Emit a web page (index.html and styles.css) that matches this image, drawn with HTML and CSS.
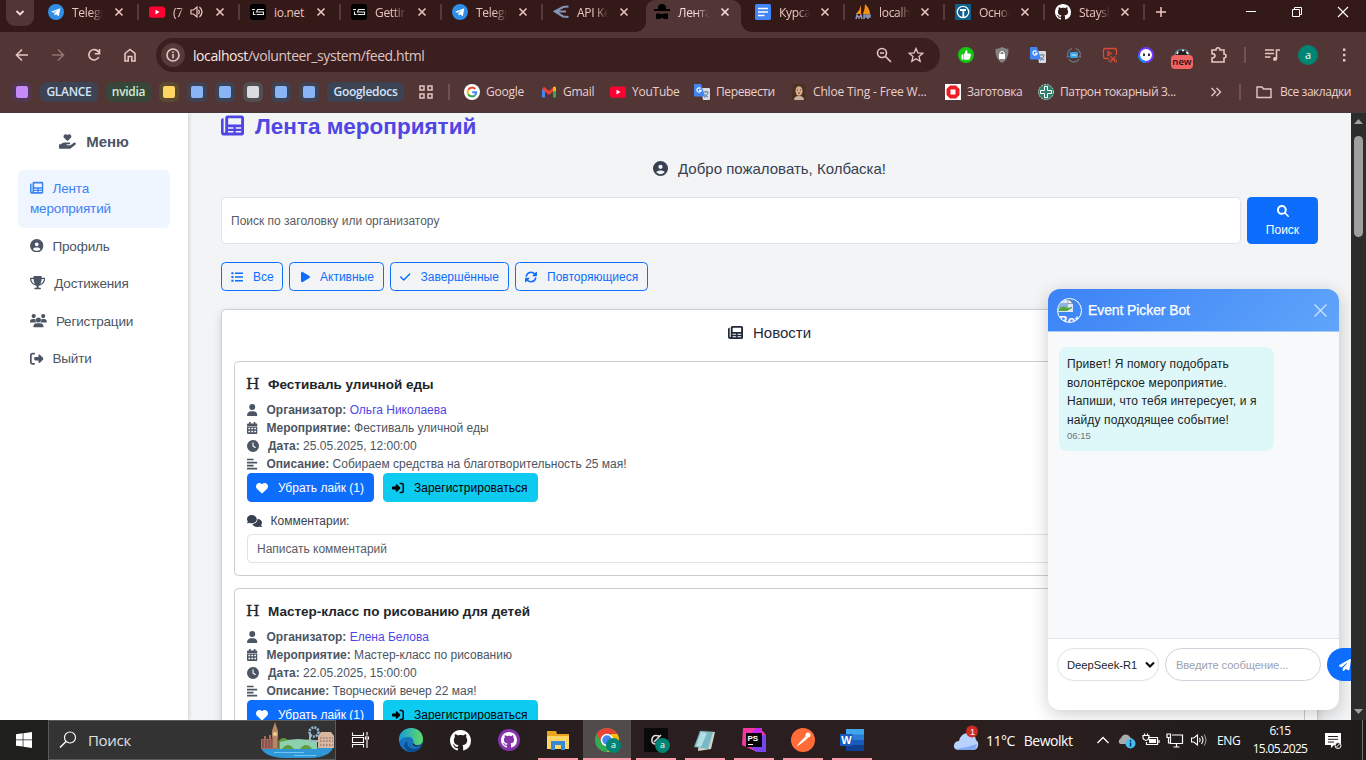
FILE: index.html
```html
<!DOCTYPE html>
<html lang="ru">
<head>
<meta charset="utf-8">
<title>Лента мероприятий</title>
<link rel="stylesheet" href="styles.css">
</head>
<body>
<svg class="sprite" xmlns="http://www.w3.org/2000/svg">
  <symbol id="telegram" viewBox="0 0 16 16"><circle cx="8" cy="8" r="8" fill="#2f8fe8"/><path fill="#fff" d="M3 7.800 12.300 4.200 10.800 12.200 8 10.200 6.500 11.500 6.300 9.200 10 6 5.300 8.700z"/></symbol>
  <symbol id="youtube" viewBox="0 0 16 16"><rect y="2.500" width="16" height="11.300" rx="2.500" fill="#f03"/><path fill="#fff" d="M6.500 5.700v4.800l4-2.400z"/></symbol>
  <symbol id="ionet" viewBox="0 0 16 16"><rect width="16" height="16" rx="3" fill="#000"/><path fill="none" stroke="#e8e8e8" stroke-width="1.100" d="M2 5.500h3M3.500 7.500v3h2M14 5.500H7.500L6.500 8H13.500V10.500H6.500"/></symbol>
  <symbol id="docs" viewBox="0 0 16 16"><rect width="16" height="16" rx="1.500" fill="#4285f4"/><path stroke="#fff" stroke-width="1.600" d="M3 4.500h10M3 8h10M3 11.500h6.500"/></symbol>
  <symbol id="github" viewBox="0 0 16 16"><path d="M8 0C3.580 0 0 3.580 0 8c0 3.540 2.290 6.530 5.470 7.590.4.070.55-.17.55-.38 0-.19-.01-.82-.01-1.490-2.010.37-2.530-.49-2.690-.94-.09-.23-.48-.94-.82-1.130-.28-.15-.68-.52-.01-.53.63-.01 1.080.58 1.230.82.72 1.210 1.870.87 2.330.66.070-.52.28-.87.51-1.070-1.780-.2-3.640-.89-3.640-3.950 0-.87.31-1.590.82-2.150-.08-.2-.36-1.020.08-2.120 0 0 .67-.21 2.200.82.64-.18 1.320-.27 2-.27s1.360.09 2 .27c1.530-1.040 2.200-.82 2.200-.82.44 1.100.16 1.920.08 2.120.51.56.82 1.270.82 2.150 0 3.070-1.870 3.750-3.650 3.950.29.25.54.73.54 1.480 0 1.070-.01 1.930-.01 2.200 0 .21.15.46.55.38A8.010 8.010 0 0 0 16 8c0-4.420-3.580-8-8-8z"/></symbol>
  <symbol id="translate" viewBox="0 0 16 16"><path fill="#d9dde3" d="M7 4h8a1 1 0 0 1 1 1v10a1 1 0 0 1-1 1H9z"/><path stroke="#5f7891" fill="none" d="M9.500 8h5M12 7v1M14 8.500c-1 3-2.500 4-4 5M10.500 10c1 1.500 2 2.500 3.500 3"/><path fill="#4285f4" d="M1 0h6l4 12.500H1a1 1 0 0 1-1-1V1a1 1 0 0 1 1-1z"/><path fill="none" stroke="#fff" stroke-width="1.200" d="M6.500 4.500a2.100 2.100 0 1 0 .6 1.800H5"/></symbol>
  <symbol id="close" viewBox="0 0 10 10"><path d="M1.500 1.500l7 7M8.500 1.500l-7 7" stroke="currentColor" stroke-width="1.600"/></symbol>
  <symbol id="newspaper" viewBox="0 0 512 512"><path fill="currentColor" fill-rule="evenodd" d="M150 32H456q56 0 56 56V424q0 56-56 56H70Q0 480 0 410V150q0-50 32-54H58V400q0 16 16 16T94 400V88q0-56 56-56zM160 96V236H448V96zM156 296v34H278v-34zM328 296v34H450v-34zM156 380v34H278v-34zM328 380v34H450v-34z"/></symbol>
  <symbol id="user-circle" viewBox="0 0 512 512"><path fill="currentColor" d="M399 384.200C376.900 345.800 335.400 320 288 320H224c-47.400 0-88.900 25.800-111 64.200c35.200 39.200 86.200 63.800 143 63.800s107.800-24.700 143-63.800zM0 256a256 256 0 1 1 512 0A256 256 0 1 1 0 256zm256 16a72 72 0 1 0 0-144 72 72 0 1 0 0 144z"/></symbol>
  <symbol id="trophy" viewBox="0 0 576 512"><path fill="currentColor" d="M400 0H176c-26.500 0-48.100 21.800-47.100 48.200c.2 5.300 .4 10.600 .7 15.800H24C10.700 64 0 74.700 0 88c0 92.600 33.500 157 78.500 200.700c44.300 43.100 98.300 64.800 138.100 75.800c23.400 6.500 39.400 26 39.400 45.600c0 20.900-17 37.900-37.900 37.900H192c-17.700 0-32 14.300-32 32s14.300 32 32 32H384c17.700 0 32-14.300 32-32s-14.300-32-32-32H357.900C337 448 320 431 320 410.100c0-19.600 15.900-39.200 39.400-45.600c39.900-11 93.900-32.700 138.200-75.800C542.500 245 576 180.600 576 88c0-13.300-10.700-24-24-24H446.400c.3-5.200 .5-10.400 .7-15.800C448.100 21.800 426.500 0 400 0zM48.900 112h84.400c9.100 90.100 29.200 150.300 51.900 190.600c-24.900-11-50.800-26.500-73.200-48.300c-32-31.100-58-76-63-142.300zM464.100 254.300c-22.400 21.800-48.300 37.300-73.200 48.300c22.700-40.300 42.800-100.500 51.900-190.600h84.400c-5.100 66.300-31.100 111.200-63 142.300z"/></symbol>
  <symbol id="users" viewBox="0 0 640 512"><g fill="currentColor"><circle cx="140" cy="80" r="80"/><circle cx="500" cy="80" r="80"/><circle cx="320" cy="224" r="96"/><path d="M0 300q0-108 108-108h60q26 0 48 12q-20 66 24 116H22Q0 320 0 300zM640 300q0-108-108-108h-60q-26 0-48 12q20 66-24 116H618q22 0 22-20zM128 485q0-133 133-133H379q133 0 133 133q0 27-27 27H155q-27 0-27-27z"/></g></symbol>
  <symbol id="sign-out" viewBox="0 0 512 512"><path fill="currentColor" d="M377.900 105.900L500.700 228.700c7.200 7.200 11.300 17.100 11.300 27.300s-4.100 20.100-11.300 27.300L377.900 406.100c-6.400 6.400-15 9.900-24 9.900c-18.700 0-33.900-15.200-33.900-33.900l0-62.100-128 0c-17.700 0-32-14.300-32-32l0-64c0-17.700 14.300-32 32-32l128 0 0-62.100c0-18.700 15.200-33.900 33.900-33.900c9 0 17.600 3.600 24 9.900zM160 96L96 96c-17.700 0-32 14.300-32 32l0 256c0 17.700 14.300 32 32 32l64 0c17.700 0 32 14.300 32 32s-14.300 32-32 32l-64 0c-53 0-96-43-96-96L0 128C0 75 43 32 96 32l64 0c17.700 0 32 14.300 32 32s-14.300 32-32 32z"/></symbol>
  <symbol id="sign-in" viewBox="0 0 512 512"><path fill="currentColor" d="M217.900 105.900L340.700 228.700c7.200 7.200 11.300 17.100 11.300 27.300s-4.100 20.100-11.300 27.300L217.900 406.100c-6.400 6.400-15 9.900-24 9.900c-18.700 0-33.900-15.200-33.900-33.900l0-62.100L32 320c-17.700 0-32-14.300-32-32l0-64c0-17.700 14.300-32 32-32l128 0 0-62.100c0-18.700 15.200-33.900 33.900-33.900c9 0 17.600 3.600 24 9.900zM352 416l64 0c17.700 0 32-14.300 32-32l0-256c0-17.700-14.300-32-32-32l-64 0c-17.700 0-32-14.300-32-32s14.300-32 32-32l64 0c53 0 96 43 96 96l0 256c0 53-43 96-96 96l-64 0c-17.700 0-32-14.300-32-32s14.300-32 32-32z"/></symbol>
  <symbol id="hand-heart" viewBox="0 0 576 512"><path fill="currentColor" d="M275 234 170 125C125 75 180-20 253 12Q278 23 288 42 298 23 323 12C396-20 451 75 406 125L301 234Q288 246 275 234zM16 352H60L108 313Q145 288 192 288H352Q380 292 384 320 382 348 352 352H272Q258 356 256 368 258 382 272 384H390L505 298Q545 276 570 310 585 345 558 370L420 474Q380 502 340 504H16Q0 502 0 488V368Q2 354 16 352z"/></symbol>
  <symbol id="list" viewBox="0 0 512 512"><path fill="currentColor" d="M16 52h90v90H16zM16 211h90v90H16zM16 370h90v90H16zM170 62h340v70H170zM170 221h340v70H170zM170 380h340v70H170z"/></symbol>
  <symbol id="play" viewBox="0 0 384 512"><path fill="currentColor" d="M73 39c-14.800-9.100-33.400-9.400-48.500-.9S0 62.600 0 80V432c0 17.400 9.400 33.400 24.500 41.900s33.700 8.100 48.500-.9L361 297c14.300-8.700 23-24.200 23-41s-8.700-32.200-23-41L73 39z"/></symbol>
  <symbol id="check" viewBox="0 0 448 512"><path fill="currentColor" d="M438.600 105.400c12.500 12.500 12.500 32.800 0 45.300l-256 256c-12.500 12.500-32.800 12.500-45.300 0l-128-128c-12.500-12.500-12.500-32.800 0-45.300s32.800-12.500 45.300 0L160 338.700 393.400 105.400c12.500-12.500 32.800-12.500 45.300 0z"/></symbol>
  <symbol id="sync" viewBox="0 0 512 512"><path fill="none" stroke="currentColor" stroke-width="66" stroke-linecap="round" d="M56 215A205 205 0 0 1 415 130M456 297A205 205 0 0 1 97 382"/><path fill="currentColor" d="M480 35q25-8 30 20V195q-2 28-30 30H340q-30-5-18-35zM32 477q-25 8-30-20V317q2-28 30-30H172q30 5 18 35z"/></symbol>
  <symbol id="search" viewBox="0 0 512 512"><path fill="currentColor" d="M416 208c0 45.900-14.900 88.300-40 122.700L502.600 457.400c12.500 12.500 12.500 32.800 0 45.300s-32.800 12.500-45.300 0L330.700 376c-34.400 25.200-76.800 40-122.700 40C93.100 416 0 322.900 0 208S93.100 0 208 0S416 93.100 416 208zM208 332a124 124 0 1 0 0-248 124 124 0 1 0 0 248z"/></symbol>
  <symbol id="user" viewBox="0 0 448 512"><path fill="currentColor" d="M224 256A128 128 0 1 0 224 0a128 128 0 1 0 0 256zm-45.700 48C79.800 304 0 383.800 0 482.300C0 498.700 13.300 512 29.700 512H418.300c16.400 0 29.700-13.300 29.700-29.700C448 383.800 368.200 304 269.700 304H178.300z"/></symbol>
  <symbol id="calendar" viewBox="0 0 448 512"><path fill="currentColor" fill-rule="evenodd" d="M90 0h70v64H288V0h70v64h42q48 0 48 48v56H0v-56q0-48 48-48h42zM0 196H448V464q0 48-48 48H48Q0 512 0 464zM60 240v65h75v-65zM186 240v65h75v-65zM312 240v65h75v-65zM60 370v65h75v-65zM186 370v65h75v-65zM312 370v65h75v-65z"/></symbol>
  <symbol id="clock" viewBox="0 0 512 512"><path fill="currentColor" d="M256 0a256 256 0 1 1 0 512A256 256 0 1 1 256 0zM232 120V256c0 8 4 15.500 10.700 20l96 64c11 7.400 25.900 4.400 33.300-6.700s4.400-25.900-6.700-33.300L280 243.200V120c0-13.300-10.700-24-24-24s-24 10.700-24 24z"/></symbol>
  <symbol id="align" viewBox="0 0 448 512"><path fill="currentColor" d="M0 30h280v70H0zM0 160h440v70H0zM0 290h280v70H0zM0 420h440v70H0z"/></symbol>
  <symbol id="heart" viewBox="0 0 512 512"><path fill="currentColor" d="M47.600 300.400L228.300 469.100c7.500 7 17.400 10.900 27.700 10.900s20.200-3.900 27.700-10.900L464.400 300.400c30.400-28.300 47.600-68 47.600-109.500v-5.800c0-69.900-50.500-129.500-119.400-141C347 36.500 300.600 51.400 268 84L256 96 244 84c-32.600-32.600-79-47.500-124.600-39.900C50.500 55.600 0 115.200 0 185.100v5.800c0 41.500 17.200 81.200 47.600 109.500z"/></symbol>
  <symbol id="comments" viewBox="0 0 640 512"><path fill="currentColor" d="M208 352c114.900 0 208-78.800 208-176S322.900 0 208 0S0 78.800 0 176c0 38.600 14.700 74.300 39.600 103.400c-3.500 9.400-8.700 17.700-14.200 24.700c-4.800 6.200-9.700 11-13.300 14.300c-1.800 1.600-3.300 2.900-4.300 3.700c-.5 .4-.9 .7-1.100 .8l-.2 .2C1 327.200-1.400 334.400 .8 340.900S9.100 352 16 352c21.800 0 43.800-5.600 62.100-12.500c9.200-3.500 17.800-7.400 25.200-11.400C134.100 343.300 169.800 352 208 352zM448 176c0 112.300-99.100 196.900-216.500 207C255.800 457.400 336.400 512 432 512c38.200 0 73.900-8.700 104.700-23.900c7.500 4 16 7.900 25.200 11.400c18.300 6.900 40.300 12.500 62.100 12.500c6.900 0 13.100-4.500 15.200-11.100c2.100-6.600-.2-13.800-5.800-17.900l-.2-.2c-.2-.2-.6-.4-1.100-.8c-1-.8-2.500-2-4.300-3.700c-3.600-3.300-8.500-8.100-13.300-14.300c-5.500-7-10.700-15.400-14.200-24.700c24.900-29 39.600-64.700 39.600-103.400c0-92.800-84.900-168.900-192.600-175.500c.4 5.100 .6 10.300 .6 15.500z"/></symbol>
  <symbol id="plane" viewBox="0 0 512 512"><path fill="currentColor" d="M498.100 5.600c10.100 7 15.400 19.100 13.500 31.200l-64 416c-1.500 9.700-7.400 18.200-16 23s-18.900 5.400-28 1.600L284 427.700l-68.500 74.100c-8.900 9.700-22.900 12.900-35.200 8.100S160 493.200 160 480V396.400c0-4 1.500-7.800 4.200-10.700L331.800 202.800c5.800-6.300 5.600-16-.4-22s-15.700-6.400-22-.7L106 360.800 17.700 316.600C7.100 311.300 .3 300.700 0 288.900s5.900-22.800 16.100-28.700l448-256c10.700-6.100 23.900-5.500 34 1.400z"/></symbol>
</svg>

<div class="screen">
  <header class="tabstrip">
    <button class="tab-search"><svg width="10" height="8" viewBox="0 0 10 8"><path d="M1.500 2 5 5.500 8.500 2" fill="none" stroke="#f3dcda" stroke-width="1.800"/></svg></button>
    <div class="tabs">
      <div class="tab"><svg class="fav"><use href="#telegram"/></svg><span class="name">Telegram</span><svg class="x"><use href="#close"/></svg></div>
      <div class="tab"><svg class="fav"><use href="#youtube"/></svg><span class="name tiny">(72)</span><svg class="sound" viewBox="0 0 14 14"><path d="M1 5h2.500L7 2v10L3.500 9H1z" fill="none" stroke="currentColor" stroke-width="1.200"/><path d="M8.500 5q1.500 2 0 4M9.500 2q5 5 0 10" fill="none" stroke="currentColor" stroke-width="1.300"/></svg><svg class="x"><use href="#close"/></svg></div>
      <div class="tab"><svg class="fav"><use href="#ionet"/></svg><span class="name">io.net</span><svg class="x"><use href="#close"/></svg></div>
      <div class="tab"><svg class="fav"><use href="#ionet"/></svg><span class="name">Getting</span><svg class="x"><use href="#close"/></svg></div>
      <div class="tab"><svg class="fav"><use href="#telegram"/></svg><span class="name">Telegram</span><svg class="x"><use href="#close"/></svg></div>
      <div class="tab no-sep"><svg class="fav" viewBox="0 0 16 16"><path d="M15.500 2.500 10 3 2 7.500l8 5 5.500.5M3 7.500h10" fill="none" stroke="#8494b5" stroke-width="2.200"/></svg><span class="name">API Key</span><svg class="x"><use href="#close"/></svg></div>
      <div class="tab active"><svg class="fav" viewBox="0 0 16 16"><path d="M4 4q0-4 4-4t4 4v1h4v2H0V5h4zM2 9.500h4l2 1 2-1h4V15h-4l-2-1.500L6 15H2z"/></svg><span class="name">Лента м</span><svg class="x"><use href="#close"/></svg></div>
      <div class="tab later"><svg class="fav"><use href="#docs"/></svg><span class="name">Курсач</span><svg class="x"><use href="#close"/></svg></div>
      <div class="tab later"><svg class="fav" viewBox="0 0 16 16"><path fill="#f29111" d="M6 1v9H1Q5 6 6 1zM10 0q5 5 5 10H8Q10 5 10 0z"/><path fill="none" stroke="#8f95b8" stroke-width="1.500" d="M1 15l1-4 2 3 2-3 1 4M9 15v-4h3v2H9M13 15v-4h2v2h-2"/></svg><span class="name">localhost</span><svg class="x"><use href="#close"/></svg></div>
      <div class="tab later"><svg class="fav" viewBox="0 0 16 16"><path fill="#0d5f8c" d="M0 0h16v16H0z"/><circle cx="8" cy="8" r="5.700" fill="none" stroke="#fff" stroke-width="1.300"/><path d="M5 6h6M8.300 6v7" stroke="#fff" stroke-width="1.800"/></svg><span class="name">Основы</span><svg class="x"><use href="#close"/></svg></div>
      <div class="tab later"><svg class="fav" fill="#fff"><use href="#github"/></svg><span class="name">Stayshe</span><svg class="x"><use href="#close"/></svg></div>
    </div>
    <svg class="newtab" viewBox="0 0 12 12"><path d="M6 1v10M1 6h10" stroke="#f0c9c5" stroke-width="1.500"/></svg>
    <div class="window-controls">
      <svg viewBox="0 0 12 12"><path d="M1 5.500h10" stroke="#fff"/></svg>
      <svg viewBox="0 0 12 12"><path d="M1.500 3.500h7v7h-7zM3.500 3.500v-2h7v7h-2" fill="none" stroke="#fff"/></svg>
      <svg viewBox="0 0 12 12"><path d="M1 1l10 10M11 1 1 11" stroke="#fff" stroke-width="1.100"/></svg>
    </div>
  </header>

  <div class="toolbar">
    <div class="cell"><svg class="ico" viewBox="0 0 16 16"><path d="M14 8H3M8 2.500 2.500 8 8 13.500" class="ln"/></svg></div>
    <div class="cell dim"><svg class="ico" viewBox="0 0 16 16"><path d="M2 8h11M8 2.500 13.500 8 8 13.500" class="ln"/></svg></div>
    <div class="cell"><svg class="ico" viewBox="0 0 16 16"><path d="M12.800 10A5.200 5.200 0 1 1 12.500 5L13 6M13.500 2v4.800H8.800" class="ln"/></svg></div>
    <div class="cell"><svg class="ico" viewBox="0 0 16 16"><path d="M3 6.500 8 2.500l5 4V14H9.800V9.500H6.200V14H3z" class="ln"/></svg></div>
    <div class="address">
      <span class="info"><svg width="14" height="14" viewBox="0 0 14 14"><circle cx="7" cy="7" r="6" class="ln"/><path d="M7 6v4.200M7 3.600v1.300" class="ln"/></svg></span>
      <span class="url"><b>localhost</b>/volunteer_system/feed.html</span>
      <svg class="ico" viewBox="0 0 16 16"><circle cx="6" cy="6" r="4.500" class="ln"/><path d="M4 6h4M9.500 9.500 15 15" class="ln"/></svg>
      <svg class="ico" viewBox="0 0 16 16"><path d="M8 1.500 9.900 6l4.800.4-3.700 3.200 1.200 4.800L8 11.800l-4.200 2.600L5 9.600 1.300 6.400 6.100 6z" class="ln thin"/></svg>
    </div>
    <div class="cell"><svg class="ico" viewBox="0 0 16 16"><circle cx="8" cy="8" r="8" fill="#13c713"/><path fill="#fff" d="M3.500 7.500h2v5h-2zM6 7.500l2-4.500q2 0 1.300 3.500H12q1.200.5.800 2l-1 3.500q-.3.700-1.200.7H6z"/></svg></div>
    <div class="cell"><svg class="ico" viewBox="0 0 16 16"><path fill="#858381" d="M8 0q4 2 6.500 2Q15 12 8 16 1 12 1.500 2 5 2 8 0z"/><path fill="#fff" d="M5 7h6v5H5z"/><path d="M6 7V5.500q2-2.500 4 0V7" fill="none" stroke="#fff"/></svg></div>
    <div class="cell"><svg class="ico"><use href="#translate"/></svg></div>
    <div class="cell"><svg class="ico" viewBox="0 0 16 16"><path d="M1.500 8Q2 3 6 1.500M9.500 1.500Q14 3 14.500 8M13 12q-2 3-5 3t-5-3" fill="none" stroke="#65777f" stroke-width="1.300"/><circle cx="2" cy="9.500" r="1.300" fill="#65777f"/><circle cx="14" cy="9.500" r="1.300" fill="#65777f"/><rect x="4" y="5" width="8" height="6" rx="1" fill="#34a3e8"/><path d="M5.500 8h5" stroke="#d5efff"/></svg></div>
    <div class="cell"><svg class="ico" viewBox="0 0 16 16"><path d="M7 11.500H3.500Q1.500 11.500 1.500 9.500v-6q0-2 2-2h9q2 0 2 2V8M6 4.500v4L9 6.500zM8.500 9.500l4.500 4M13.500 9.500l-4 4" fill="none" stroke="#da4a38" stroke-width="1.300"/><circle cx="8.500" cy="14" r="1.300" fill="none" stroke="#da4a38"/><circle cx="13.500" cy="14" r="1.300" fill="none" stroke="#da4a38"/></svg></div>
    <div class="cell"><svg class="ico" viewBox="0 0 16 16"><circle cx="8" cy="8" r="7" fill="#fff" stroke="#6a39ff" stroke-width="2"/><path d="M1 8a7 7 0 0 0 7 7" fill="none" stroke="#168fff" stroke-width="2"/><path d="M6 6.500v2.500M11 6.500v2.500" stroke="#111" stroke-width="1.700"/></svg></div>
    <div class="cell new-ext"><svg viewBox="0 0 16 8" width="16" height="8"><path d="M1 8q0-6.500 7-6.500T15 8" fill="#222" stroke="#5b7180" stroke-width="1.500"/><path d="M4 3.500 3 6M8 2.500h2M12.500 4 14 6" stroke="#fff" stroke-width="1.500"/></svg><span class="new">new</span></div>
    <div class="cell"><svg class="ico big" viewBox="0 0 18 18"><path d="M3 4h4q0-2.300 2-2.300t2 2.300h4v4q2 0 2 2t-2 2v4H3v-4q3-.3 3-2.200T3 7.600z" class="ln"/></svg></div>
    <span class="vsep"></span>
    <div class="cell"><svg class="ico" viewBox="0 0 16 16"><path d="M1 3h9M1 6.500h9M1 10h5.500M12.500 12V3H16" class="ln"/><circle cx="11" cy="12" r="2" fill="currentColor"/></svg></div>
    <div class="cell"><span class="avatar">a</span></div>
    <div class="cell"><svg class="ico" viewBox="0 0 16 16"><path fill="currentColor" d="M7 1.500h2.400v2.400H7zM7 6.800h2.400v2.400H7zM7 12h2.400v2.400H7z"/></svg></div>
  </div>

  <nav class="bookmarks">
    <div class="groups">
      <span class="chip purple"><i></i></span><span class="chip blue word w1">GLANCE</span><span class="chip green word w2">nvidia</span><span class="chip yellow"><i></i></span><span class="chip blue"><i></i></span><span class="chip blue"><i></i></span><span class="chip grey"><i></i></span><span class="chip blue"><i></i></span><span class="chip blue"><i></i></span><span class="chip blue word w3">Googledocs</span>
    </div>
    <svg class="apps" viewBox="0 0 14 14"><path d="M1 1h4v4H1zM9 1h4v4H9zM1 9h4v4H1zM9 9h4v4H9z" fill="none" stroke="#e3c6c3" stroke-width="1.500"/></svg>
    <span class="vsep"></span>
    <div class="links">
      <span class="bm"><svg viewBox="0 0 16 16"><circle cx="8" cy="8" r="8" fill="#fff"/><g fill="none" stroke-width="2"><path stroke="#ea4335" d="M11.200 5A4.400 4.400 0 0 0 4.200 5.800"/><path stroke="#fbbc05" d="M4.200 5.800a4.400 4.400 0 0 0 0 4.400"/><path stroke="#34a853" d="M4.200 10.200a4.400 4.400 0 0 0 6.600 1.200"/><path stroke="#4285f4" d="M10.800 11.400Q12.400 10 12.300 8.200H8.200"/></g></svg>Google</span>
      <span class="bm"><svg viewBox="0 0 16 16"><path d="M2.500 13.500V5" stroke="#4285f4" stroke-width="3"/><path d="M13.500 13.500V5" stroke="#34a853" stroke-width="3"/><path d="M2 4l6 5 6-5" fill="none" stroke="#ea4335" stroke-width="3"/><path d="M12 5.500V3l2-.5 1 1V7h-3z" fill="#fbbc04"/></svg>Gmail</span>
      <span class="bm"><svg><use href="#youtube"/></svg>YouTube</span>
      <span class="bm"><svg><use href="#translate"/></svg>Перевести</span>
      <span class="bm"><svg viewBox="0 0 16 16"><path fill="#4b3020" d="M2 0h12l1 16H1z"/><ellipse cx="8" cy="7" rx="3.500" ry="4.800" fill="#d8ab89"/><path fill="#c9b29f" d="M3 16q0-4 5-4t5 4z"/><path d="M6 6h1M9 6h1M7 9h2" stroke="#6a3d2e"/></svg>Chloe Ting - Free W...</span>
      <span class="bm"><svg viewBox="0 0 16 16"><path fill="#fff" d="M0 0h16v16H0z"/><path fill="#ed1c24" fill-rule="evenodd" d="M5 1.500h6L14.500 5v6L11 14.500H5L1.500 11V5zM5.500 5.500v5h5v-5z"/></svg>Заготовка</span>
      <span class="bm"><svg viewBox="0 0 16 16"><circle cx="8" cy="8" r="7.500" fill="#2d7f6b" stroke="#b9d8cc" stroke-dasharray="2 1"/><path d="M6.500 2.500h3v4h4v3h-4v4h-3v-4h-4v-3h4z" fill="#2d7f6b" stroke="#fff"/></svg>Патрон токарный 3...</span>
    </div>
    <svg class="more" viewBox="0 0 12 10"><path d="M1.500 1 5.500 5l-4 4M6.500 1l4 4-4 4" fill="none" stroke="#e3c6c3" stroke-width="1.400"/></svg>
    <span class="vsep"></span>
    <span class="bm all"><svg viewBox="0 0 16 16"><path d="M1 3h5l1.500 2H15v8.500H1z" fill="none" stroke="#e3c6c3" stroke-width="1.400"/></svg>Все закладки</span>
  </nav>

  <div class="viewport">
    <aside class="sidebar">
      <div class="brand"><svg class="fa w576"><use href="#hand-heart"/></svg>Меню</div>
      <a class="item current"><svg class="fa"><use href="#newspaper"/></svg>Лента мероприятий</a>
      <a class="item"><svg class="fa"><use href="#user-circle"/></svg>Профиль</a>
      <a class="item"><svg class="fa w576"><use href="#trophy"/></svg>Достижения</a>
      <a class="item"><svg class="fa w640"><use href="#users"/></svg>Регистрации</a>
      <a class="item"><svg class="fa"><use href="#sign-out"/></svg>Выйти</a>
    </aside>
    <main class="content">
      <h1><svg class="fa"><use href="#newspaper"/></svg>Лента мероприятий</h1>
      <p class="welcome"><svg class="fa"><use href="#user-circle"/></svg>Добро пожаловать, Колбаска!</p>
      <div class="searchrow">
        <div class="field">Поиск по заголовку или организатору</div>
        <button class="btn primary stacked"><svg class="fa"><use href="#search"/></svg>Поиск</button>
      </div>
      <div class="filters">
        <button class="btn outline f1"><svg class="fa"><use href="#list"/></svg>Все</button>
        <button class="btn outline f2"><svg class="fa w384"><use href="#play"/></svg>Активные</button>
        <button class="btn outline f3"><svg class="fa w448"><use href="#check"/></svg>Завершённые</button>
        <button class="btn outline f4"><svg class="fa"><use href="#sync"/></svg>Повторяющиеся</button>
      </div>
      <section class="feed">
        <h2><svg class="fa"><use href="#newspaper"/></svg>Новости</h2>
        <article class="card">
          <h3><span class="heading-icon">H</span>Фестиваль уличной еды</h3>
          <p><svg class="fa w448"><use href="#user"/></svg><b>Организатор:</b> <a>Ольга Николаева</a></p>
          <p><svg class="fa w448"><use href="#calendar"/></svg><b>Мероприятие:</b> Фестиваль уличной еды</p>
          <p><svg class="fa"><use href="#clock"/></svg><b>Дата:</b> 25.05.2025, 12:00:00</p>
          <p><svg class="fa w448"><use href="#align"/></svg><b>Описание:</b> Собираем средства на благотворительность 25 мая!</p>
          <div class="actions"><button class="btn primary like"><svg class="fa"><use href="#heart"/></svg>Убрать лайк (1)</button><button class="btn cyan"><svg class="fa"><use href="#sign-in"/></svg>Зарегистрироваться</button></div>
          <div class="comments"><svg class="fa w640"><use href="#comments"/></svg>Комментарии:</div>
          <div class="field small">Написать комментарий</div>
        </article>
        <article class="card">
          <h3><span class="heading-icon">H</span>Мастер-класс по рисованию для детей</h3>
          <p><svg class="fa w448"><use href="#user"/></svg><b>Организатор:</b> <a>Елена Белова</a></p>
          <p><svg class="fa w448"><use href="#calendar"/></svg><b>Мероприятие:</b> Мастер-класс по рисованию</p>
          <p><svg class="fa"><use href="#clock"/></svg><b>Дата:</b> 22.05.2025, 15:00:00</p>
          <p><svg class="fa w448"><use href="#align"/></svg><b>Описание:</b> Творческий вечер 22 мая!</p>
          <div class="actions"><button class="btn primary like"><svg class="fa"><use href="#heart"/></svg>Убрать лайк (1)</button><button class="btn cyan"><svg class="fa"><use href="#sign-in"/></svg>Зарегистрироваться</button></div>
          <div class="comments"></div>
          <div class="field small"></div>
        </article>
      </section>
    </main>
    <section class="chat">
      <header>
        <span class="bot"><svg width="16" height="14" viewBox="0 0 16 14"><path fill="#dbe8fb" d="M0 1h11l4 4v8H0z"/><path fill="#8db4e0" d="M0 4h10v6H0z"/><path fill="#57a639" d="M0 12Q4 5 9 9l5-1v1l-5 3z"/><path fill="#fff" stroke="#777" stroke-width=".7" d="M10 0v4.500h5z"/></svg><em>Bot</em></span>
        <span class="chat-title">Event Picker Bot</span>
        <svg class="chat-x" viewBox="0 0 12 12"><path d="M.5.5l11 11M11.500.5l-11 11" stroke="#cfe2fd" stroke-width="1.200"/></svg>
      </header>
      <div class="messages"><div class="bubble">Привет! Я помогу подобрать<br>волонтёрское мероприятие.<br>Напиши, что тебя интересует, и я<br>найду подходящее событие!<small>06:15</small></div></div>
      <footer>
        <span class="select">DeepSeek-R1<svg width="10" height="8" viewBox="0 0 10 8"><path d="M1 1.500 5 5.500 9 1.500" fill="none" stroke="#111" stroke-width="2.200"/></svg></span>
        <span class="message">Введите сообщение...</span>
        <button class="send"><svg class="fa"><use href="#plane"/></svg></button>
      </footer>
    </section>
    <div class="scrollbar"><svg width="9" height="5" viewBox="0 0 9 5"><path fill="#a0a0a0" d="M0 5 4.500 0 9 5z"/></svg><i></i><svg width="9" height="5" viewBox="0 0 9 5"><path fill="#a0a0a0" d="M0 0l4.500 5L9 0z"/></svg></div>
  </div>

  <footer class="taskbar">
    <div class="start"><svg width="16" height="16" viewBox="0 0 16 16"><path fill="#fff" d="M0 2.200 6.700 1.300v6.200H0zM7.400 1.200 16 0v7.500H7.400zM0 8.200h6.700v6.400L0 13.700zM7.400 8.200H16V16l-8.600-1.200z"/></svg></div>
    <div class="wsearch"><svg width="18" height="18" viewBox="0 0 18 18"><circle cx="11" cy="6.500" r="5.500" fill="none" stroke="#fff" stroke-width="1.200"/><path d="M7 10.500 1 16.500" stroke="#fff" stroke-width="1.400"/></svg><span>Поиск</span>
      <svg class="city" width="74" height="37" viewBox="0 0 74 37"><path fill="#2f97d8" d="M1 26h72q-4 9-22 10H24Q5 35 1 26z"/><path fill="#6fc5ee" d="M14 30h30v1H14zM34 33h22v1H34z"/><path fill="#5f9c3b" d="M18 20q5-8 12 0h14q6-6 12 0l2 7H18z"/><path fill="#8ed0ae" d="M20 20q18-6 37 0v7h-5q-6-8-12 0h-6q-6-8-12 0h-2z"/><path fill="#a6695c" d="M1 17h3v-3h2v3h3v-4h2v4h7v10H1z"/><path fill="#b98765" d="M12 9l2-6 1-3 1 3 2 6v17h-6z"/><circle cx="15" cy="12" r="2" fill="#f3d287"/><path stroke="#6d4347" d="M3 18v8M6 18v8M9 18v8M12 15v11M18 15v11"/><circle cx="54" cy="10" r="4.500" fill="none" stroke="#90bdd9" stroke-width="2.500" stroke-dasharray="2 1"/><path d="M50 11v8h8" fill="none" stroke="#9db7ca" stroke-width="2"/><path fill="#d9b69f" d="M58 14l3-4h10l3 4v12H58z"/><path stroke="#76504d" stroke-dasharray="1.500 1.500" d="M60 16h13M60 19h13M60 23h13"/></svg>
    </div>
    <div class="apps-row">
      <div class="app view"><svg width="18" height="18" viewBox="0 0 18 18"><path d="M1.500 1.500v3h11v-3M1.500 16.500v-3h11v3M1.500 6.500h11v5h-11zM16 1v3.500M16 9v8M14.500 6h3v2h-3z" fill="none" stroke="#fff" stroke-width="1.100"/></svg></div>
      <div class="app"><svg width="24" height="24" viewBox="0 0 24 24"><defs><linearGradient id="eg"><stop stop-color="#159bd7"/><stop offset="1" stop-color="#62dc65"/></linearGradient></defs><circle cx="12" cy="12" r="12" fill="#1672bf"/><path fill="url(#eg)" d="M0 10C2-3 23-4 24 11q0 6-7 6-4 0-3-3 1-5-5-5-6 0-9 5z"/><path fill="#0d4c8f" d="M8 13q0 8 8 8l6-2q-5 7-13 4-7-5-1-10z"/><path fill="#251d1e" d="M14 17q3 3 10 0v-1q-4 3-8 1-2-2-1-5z"/></svg></div>
      <div class="app"><svg width="21" height="21" fill="#fff" viewBox="0 0 16 16"><use href="#github" width="16" height="16"/></svg></div>
      <div class="app"><svg width="22" height="22" viewBox="0 0 22 22"><circle cx="11" cy="11" r="11" fill="#8534ad"/><svg x="3" y="3" width="16" height="16" fill="#fff"><use href="#github"/></svg></svg></div>
      <div class="app run"><svg width="22" height="19" viewBox="0 0 22 19"><path fill="#e9a61c" d="M0 0h9l1 3h12v4H0z"/><path fill="#ffd566" d="M0 5h22v13H0z"/><path fill="#368ad5" d="M4 10h14v9h-4v-5H8v5H4z"/></svg></div>
      <div class="app run selected"><svg width="28" height="28" viewBox="0 0 28 28"><circle cx="14" cy="14" r="12" fill="#34a853"/><path fill="#ea4335" d="M3.600 8a12 12 0 0 1 20.800 0H14l-5 9z"/><path fill="#fbbc05" d="M24.400 8A12 12 0 0 1 14 26l5-9-1-9z"/><circle cx="14" cy="14" r="5.500" fill="#4285f4" stroke="#fff" stroke-width="1.500"/></svg><span class="badge">a</span></div>
      <div class="app run"><svg width="24" height="24" viewBox="0 0 24 24"><path fill="#090909" d="M0 0h24v24H0z"/><path d="M15 8q-6-2-7 3t4 5M10 14l7-7" fill="none" stroke="#ddd" stroke-width="1.600"/></svg><span class="badge">a</span></div>
      <div class="app run"><svg width="22" height="22" viewBox="0 0 22 22"><path fill="#d1d4c9" d="M6 2l15 1-4 17-13 2z"/><path fill="#79b9c6" d="M6 2l13 1-5 17L0 18z"/><path fill="#b3dfe2" d="M7 3l6 1-6 14-5-1z"/><path stroke="#444" stroke-dasharray="1 1" d="M6 1.500l14 1"/></svg></div>
      <div class="app run"><svg width="24" height="24" viewBox="0 0 24 24"><path fill="#f537a1" d="M1 0h17l6 7v17h-9L0 17z"/><path fill="#7745ef" d="M7 18 20 7h4v17h-9z"/><path fill="#c02af0" d="M14 0h6v6H9z"/><path fill="#050505" d="M4 5h16v14H4z"/><path d="M6 16.500h5" stroke="#fff"/><text x="5.500" y="12.500" class="pstext">PS</text></svg></div>
      <div class="app run"><svg width="24" height="24" viewBox="0 0 24 24"><circle cx="12" cy="12" r="12" fill="#ff6c37"/><path fill="#fff" d="M5 19l4-5 6-6 2 2-6 5z"/><circle cx="17" cy="7" r="2.500" fill="#fff"/></svg></div>
      <div class="app run"><svg width="24" height="22" viewBox="0 0 24 22"><path fill="#41a5ee" d="M6 0h18v6H6z"/><path fill="#2b7cd3" d="M6 5.500h18V11H6z"/><path fill="#185abd" d="M6 11h18v5.500H6z"/><path fill="#103f91" d="M6 16.500h18V22H6z"/><path fill="#185abd" d="M0 5h12.500v12H0z"/><text x="1.200" y="15" class="wtext">W</text></svg></div>
    </div>
    <div class="weather"><svg width="26" height="27" viewBox="0 0 26 27"><path fill="#b8d2ff" d="M5 25q-5-1-4-5 1-4 5-4 2-8 9-8t8 7q3 2 2 6-1 4-5 4z"/><path fill="#82abf6" d="M3 24q10-1 21-5-1 6-5 6H5z"/><circle cx="19" cy="6.500" r="6" fill="#cf2c20"/><text x="17" y="10" class="one">1</text></svg><span>11°C</span><span>Bewolkt</span></div>
    <div class="tray">
      <svg viewBox="0 0 18 18"><path d="M3.500 12 9 6.500l5.500 5.500" fill="none" stroke="#fff" stroke-width="1.300"/></svg>
      <svg viewBox="0 0 18 18"><path fill="#aaa" d="M2 13q-3-3 1-6 2-5 7-3l4 4v5z"/><circle cx="12.500" cy="12.500" r="5" fill="#48bff3"/><path d="M12.500 11.500v4M12.500 9v1.500" stroke="#06334f" stroke-width="1.500"/></svg>
      <svg viewBox="0 0 18 18"><path d="M6 6.500h9.500v7H4.500V11M17 9v3M1 4.500h6v2.500Q6 9.500 4 9.500T1 7zM2.500 4V2.500M5.500 4V2.500" fill="none" stroke="#fff" stroke-width="1.200"/><path fill="#fff" d="M7 8h7v4H7z"/></svg>
      <svg viewBox="0 0 18 18"><path d="M6 4h10.500v8.500H4.500V7M10.500 12.500V16M7.500 16h6M1 3h3.500v3.500H1zM2.500 6.500V12h2" fill="none" stroke="#fff" stroke-width="1.200"/></svg>
      <svg viewBox="0 0 18 18"><path d="M1.500 7h2.300L7.500 4v10L3.800 11H1.500zM9.500 7q1.500 2 0 4M11.500 5q3 4 0 8" fill="none" stroke="#fff" stroke-width="1.100"/><path d="M14 3.500q4 5.500 0 11" fill="none" stroke="#999" stroke-width="1.100"/></svg>
      <span class="lang">ENG</span>
      <span class="clock"><span>6:15</span><span>15.05.2025</span></span>
      <svg class="notes" viewBox="0 0 17 17"><path fill="#fff" d="M0 1h16v12H9l-3 3v-3H0z"/><path d="M3 4.500h10M3 7.300h10M3 10h6" stroke="#251d1e"/><circle cx="13" cy="13.500" r="3" fill="#251d1e" stroke="#fff"/><path d="M11 15.500l4-4" stroke="#fff"/></svg>
      <i class="peek"></i>
    </div>
  </footer>
</div>
</body>
</html>
```
FILE: styles.css
```css
* { box-sizing: border-box; }
body { margin: 0; font-family: "Liberation Sans", Arial, sans-serif; }
button { font: inherit; border: 0; padding: 0; }
svg { flex: none; }
.sprite { display: none; }
.screen { width: 1366px; height: 760px; overflow: hidden; display: flex; flex-direction: column; }

/* Browser chrome */
.tabstrip, .toolbar, .bookmarks, .taskbar { font-family: "Open Sans", "Noto Sans", sans-serif; }
.tabstrip { height: 32px; background: #331a19; display: flex; position: relative; flex: none; color: #eac4c0; }
.tab-search { width: 28px; height: 26px; margin-left: 6px; border-radius: 0 0 9px 9px; background: #523636; display: flex; justify-content: center; align-items: center; }
.tabs { display: flex; margin-left: 6px; }
.tab { width: 101px; height: 24px; padding-left: 8px; display: flex; align-items: center; position: relative; font-size: 12px; }
.tab.later { width: 100px; }
.tab::after { content: ""; position: absolute; right: 2px; top: 4px; width: 2px; height: 16px; background: #573b3a; }
.tab.no-sep::after { display: none; }
.fav { width: 16px; height: 16px; }
.name { width: 31px; margin-left: 8px; overflow: hidden; white-space: nowrap; letter-spacing: -.3px; line-height: 20px; padding-top: 1px; -webkit-mask-image: linear-gradient(90deg, #000 60%, transparent 100%); mask-image: linear-gradient(90deg, #000 60%, transparent 100%); }
.tab:nth-child(3) .name { -webkit-mask-image: none; mask-image: none; }
.name.tiny { width: 11px; }
.sound { width: 14px; height: 14px; margin-left: 6px; }
.x { width: 10px; height: 10px; margin-left: 11px; }
.later .x { margin-left: 10px; }
.active { height: 32px; padding-bottom: 8px; color: #f6dedb; z-index: 1; }
.active::after { right: 6px; left: 0; top: 0; width: auto; height: 32px; background: #523636; border-radius: 9px 9px 0 0; z-index: -1; }
.active::before { content: ""; position: absolute; left: -10px; right: -4px; bottom: 0; height: 10px; z-index: -2; background: radial-gradient(circle at 0 0, transparent 9.500px, #523636 10px) left / 10px 10px no-repeat, radial-gradient(circle at 100% 0, transparent 9.500px, #523636 10px) right / 10px 10px no-repeat; }
.newtab { width: 12px; height: 12px; margin: 6px 0 0 8px; }
.window-controls { margin: 6px 17px 0 auto; display: flex; gap: 34px; }
.window-controls svg { width: 12px; height: 12px; }
.toolbar { height: 46px; flex: none; background: #523636; color: #e8c6c2; display: flex; align-items: center; padding-left: 4px; }
.cell { width: 36px; display: flex; justify-content: center; align-items: center; flex: none; }
.dim { color: #927370; }
.ico { width: 16px; height: 16px; }
.ico.big { width: 18px; height: 18px; }
.ln { fill: none; stroke: currentColor; stroke-width: 1.600; }
.ln.thin { stroke-width: 1.300; }
.address { width: 784px; height: 34px; margin: 0 8px; border-radius: 17px; background: #3b1e1f; display: flex; align-items: center; padding: 0 16px 0 5px; gap: 16px; }
.info { width: 24px; height: 24px; border-radius: 50%; background: #553a3a; display: flex; align-items: center; justify-content: center; }
.url { margin-left: -8px; margin-right: auto; font-size: 14px; letter-spacing: -.42px; color: #dec5c2; }
.url b { font-weight: 400; color: #fae6e3; }
.new-ext { flex-direction: column; margin-top: 7px; }
.new { width: 22px; height: 14px; margin-top: -1px; background: #f16464; border-radius: 4px; color: #25110f; font-size: 9.500px; font-weight: 600; line-height: 13px; text-align: center; }
.vsep { width: 2px; height: 16px; background: #725150; flex: none; }
.toolbar .vsep { margin: 0 8px; }
.avatar { width: 20px; height: 20px; border-radius: 50%; background: #008575; color: #fff; font-size: 11px; line-height: 19px; text-align: center; }
.bookmarks { height: 35px; flex: none; background: #523636; color: #e9d0cd; display: flex; align-items: center; padding: 0 0 7px 12px; font-size: 12px; border-bottom: 1px solid #47393a; }
.groups { display: flex; gap: 8px; }
.chip { width: 20px; height: 20px; border-radius: 6px; display: flex; align-items: center; justify-content: center; }
.chip i { width: 12px; height: 12px; border-radius: 2px; background: currentColor; }
.word { font-weight: 600; letter-spacing: -.3px; line-height: 20px; }
.purple { background: #503650; color: #c58af9; }
.blue { background: #3e4354; color: #8ab4f8; }
.blue.word { color: #d2e3fc; }
.green { background: #38463a; color: #ceead6; }
.yellow { background: #5a482f; color: #fdd663; }
.grey { background: #514f4f; color: #dadce0; }
.w1 { width: 58px; } .w2 { width: 45px; } .w3 { width: 77px; }
.apps { width: 14px; height: 14px; margin: 0 15px 0 15px; }
.links { display: flex; margin-left: 14px; width: 746px; }
.bm { display: flex; align-items: center; gap: 6px; letter-spacing: -.25px; white-space: nowrap; line-height: 18px; }
.bm svg { width: 16px; height: 16px; }
.bm:nth-child(1) { width: 77px; } .bm:nth-child(2) { width: 69px; } .bm:nth-child(3) { width: 84px; } .bm:nth-child(4) { width: 97px; }
.bm:nth-child(5) { width: 154px; } .bm:nth-child(6) { width: 93px; }
.bm:nth-child(n+4) { letter-spacing: -.38px; }
.bm:nth-child(5) { letter-spacing: -.15px; }
.more { width: 12px; height: 10px; margin: 0 17px 0 0; }
.bookmarks .all { margin-left: 15px; gap: 8px; width: auto; letter-spacing: -.45px; }

/* Page */
.viewport { height: 607px; flex: none; display: flex; position: relative; overflow: hidden; background: #f3f4f6; color: #212529; font-size: 12px; }
.fa { width: 1em; height: 1em; vertical-align: -.125em; margin-right: .78em; }
.w384 { width: .75em; } .w448 { width: .875em; } .w576 { width: 1.125em; } .w640 { width: 1.250em; }
.sidebar { width: 188px; flex: none; background: #fff; box-shadow: 1px 0 4px rgba(0,0,0,.16); padding: 18px 18px; color: #4b5563; z-index: 1; }
.brand { height: 21px; line-height: 21px; font-size: 15px; font-weight: 700; text-align: center; margin-bottom: 18px; letter-spacing: -.1px; }
.brand .fa { margin-right: 10px; }
.item { display: block; font-size: 13.500px; letter-spacing: -.17px; line-height: 20.250px; padding: 8.700px 12px; border-radius: 6px; color: #4b5563; }
.item .fa { margin-right: 9px; }
.current { background: #eff6ff; color: #3b82f6; }
.content { width: 1163px; flex: none; padding: 0 33px; }
h1, h2, h3, p { margin: 0; font-weight: 400; }
h1 { font-size: 22.500px; height: 27px; line-height: 27px; font-weight: 700; color: #4f46e5; margin-bottom: 18px; }
h1 .fa { width: 23px; height: 23px; margin-right: 11px; vertical-align: -2.500px; }
.welcome { height: 22px; text-align: center; font-size: 15px; line-height: 22px; color: #374151; margin-bottom: 17px; }
.welcome .fa { margin-right: 10px; }
.searchrow { display: flex; gap: 6px; height: 47px; }
.field { flex: 1; border: 1px solid #dee2e6; border-radius: 4.500px; background: #fff; color: #595c5f; padding: 0 9px; display: flex; align-items: center; }
.btn { height: 29px; border-radius: 4.500px; display: inline-flex; align-items: center; padding: 0 9px; font-size: 12px; white-space: nowrap; }
.btn .fa { margin-right: 10px; }
.primary { background: #0d6efd; color: #fff; }
.stacked { width: 71px; height: 47px; flex-direction: column; justify-content: center; line-height: 18px; gap: 4px; padding-top: 2px; }
.stacked .fa { margin: 0; }
.filters { display: flex; gap: 6px; margin-top: 18px; }
.outline { background: transparent; border: 1px solid #0d6efd; color: #0d6efd; }
.f1 { width: 62px; } .f2 { width: 95px; padding-left: 11px; } .f3 { width: 119px; } .f4 { width: 133px; }
.feed { margin-top: 18px; padding: 12px; border: 1px solid #cbcdd0; border-radius: 4.500px; background: #fff; box-shadow: 0 4px 10px rgba(0,0,0,.15); height: 480px; }
h2 { font-size: 15px; height: 22px; line-height: 22px; text-align: center; margin-bottom: 17px; color: #1f2937; }
h2 .fa { margin-right: 10px; }
.card { height: 215px; border: 1px solid #ccc; border-radius: 4.500px; padding: 12px; margin-bottom: 12px; }
h3 { font-size: 13.500px; font-weight: 700; line-height: 22px; height: 20px; margin-bottom: 7px; }
.heading-icon { font-family: "DejaVu Serif", serif; font-weight: 400; font-size: 15.500px; line-height: 18px; display: inline-block; width: 22px; -webkit-text-stroke: .3px; margin-left: -1px; }
.card p { line-height: 18px; height: 18px; color: #4b5563; }
.card p .fa { margin-right: 9px; }
.card a { color: #4f46e5; }
.actions { display: flex; gap: 9px; }
.like { width: 127px; }
.cyan { background: #0dcaf0; color: #000; width: 155px; }
.comments { height: 18px; line-height: 18px; margin: 10px 0 4px; color: #374151; }
.comments .fa { margin-right: 8.500px; }
.small { height: 29px; }
.chat { position: absolute; left: 1048px; top: 176px; width: 291px; height: 421px; border-radius: 12px; background: #fff; box-shadow: 0 4px 18px rgba(0,0,0,.2); display: flex; flex-direction: column; }
.chat header { height: 43px; border-radius: 12px 12px 0 0; background: linear-gradient(135deg, #3b82f6, #60a5fa); border-bottom: 1px solid #a9cbf8; display: flex; align-items: center; padding: 0 12px 0 9px; color: #fff; }
.bot { width: 25px; height: 25px; border: 1px solid #fff; border-radius: 50%; overflow: hidden; display: flex; flex-wrap: wrap; align-content: flex-start; }
.bot em { width: 24px; font-style: normal; font-weight: 700; font-size: 12px; line-height: 17px; flex: none; padding-left: 1px; }
.chat-title { font-size: 14px; letter-spacing: -.1px; margin: 0 auto 0 6px; -webkit-text-stroke: .25px #fff; }
.chat-x { width: 13px; height: 13px; }
.messages { height: 306px; background: #f8f9fb; padding: 15px 11px; }
.bubble { width: 215px; height: 104px; border-radius: 8px; background: #def7f8; padding: 8px; line-height: 18.600px; letter-spacing: .12px; color: #212529; white-space: nowrap; }
.bubble small { display: block; font-size: 9.500px; line-height: 13px; letter-spacing: 0; color: #6c757d; }
.chat footer { border-top: 1px solid #e3e5e8; padding: 9px; display: flex; gap: 6px; }
.select, .message { height: 33px; border: 1px solid #dee2e6; border-radius: 17px; display: flex; align-items: center; flex: none; }
.select { width: 102px; padding-left: 9px; gap: 8px; font-size: 11.200px; }
.message { width: 156px; border-color: #d0d3dc; padding-left: 10px; font-size: 11.200px; letter-spacing: -.1px; color: #9ca3af; }
.send { width: 48px; height: 33px; flex: none; border-radius: 17px; background: #0d6efd; color: #fff; display: flex; align-items: center; padding-left: 12px; }
.send .fa { width: 12px; height: 12px; margin: 0; }
.scrollbar { width: 15px; margin-left: auto; flex: none; background: #2c2c2c; z-index: 2; display: flex; flex-direction: column; align-items: center; padding: 6px 0; }
.scrollbar i { width: 9px; height: 101px; margin: 12px 0 auto; border-radius: 5px; background: #9f9f9f; }

/* Taskbar */
.taskbar { height: 40px; flex: none; display: flex; color: #fff; background: linear-gradient(90deg, #1f1f1c 0, #20201d 40px, #2b1d1e 340px, #241e1d 480px, #2b1e20 620px, #2b1e1f 1060px, #211d1c 1200px, #1e1c1b 100%); position: relative; }
.start { width: 48px; display: flex; align-items: center; justify-content: center; }
.wsearch { width: 288px; background: #333; border: 1px solid #5c5a59; display: flex; align-items: center; padding-left: 10px; gap: 11px; font-size: 15px; letter-spacing: -.3px; color: #e0e0e0; }
.city { margin-left: auto; margin-right: 1px; }
.apps-row { display: flex; }
.app { width: 49px; height: 40px; display: flex; align-items: center; justify-content: center; position: relative; padding-right: 1px; }
.view { width: 51px; padding-right: 4px; }
.run::after { content: ""; position: absolute; left: 4px; right: 5px; bottom: 0; height: 2px; background: #ff9baa; }
.selected { background: linear-gradient(90deg, #524b4b 48px, transparent 48px); }
.selected::after { left: 0; right: 1px; }
.badge { position: absolute; left: 23px; top: 18px; width: 15px; height: 15px; border-radius: 50%; background: #008575; font-size: 9px; line-height: 14px; text-align: center; }
.pstext { font: 700 8px "Liberation Sans", sans-serif; fill: #fff; }
.wtext { font: 700 11px "Liberation Sans", sans-serif; fill: #fff; }
.one { font: 9px "Liberation Sans", sans-serif; fill: #fff; }
.weather { display: flex; align-items: center; margin-left: 76px; font-size: 14px; letter-spacing: -.5px; }
.weather svg { margin: -4px 7px 0 0; }
.weather span { margin-right: 9px; white-space: nowrap; }
.tray { display: flex; align-items: center; position: absolute; right: 0; top: 0; height: 40px; width: 272px; gap: 6px; }
.tray svg { width: 18px; height: 18px; }
.lang { font-size: 12px; letter-spacing: -.3px; margin-left: 3px; width: 24px; }
.clock { width: 62px; margin-left: 2px; font-size: 12px; letter-spacing: -.65px; display: flex; flex-direction: column; align-items: center; line-height: 18px; }
.tray .notes { width: 17px; height: 17px; margin-left: 8px; }
.peek { width: 1px; height: 40px; background: #777; margin-left: auto; margin-right: 3px; }
```
